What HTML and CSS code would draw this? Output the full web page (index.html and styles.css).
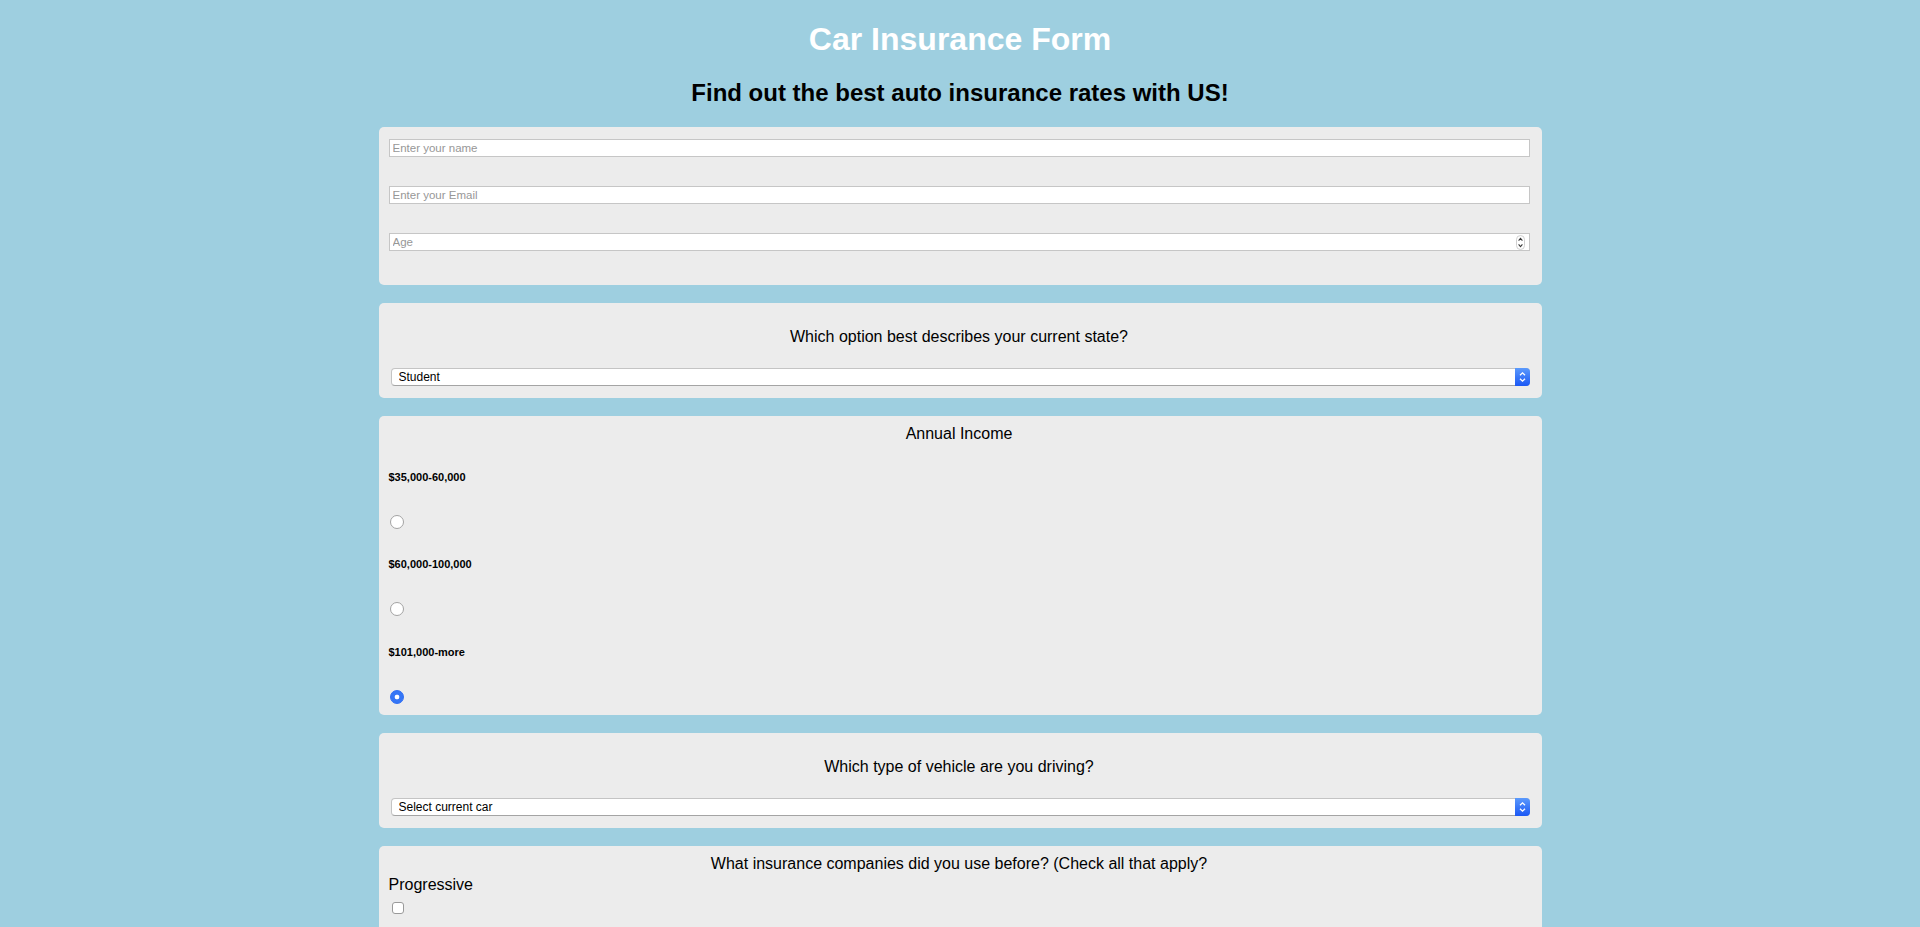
FILE: index.html
```html
<!DOCTYPE html>
<html lang="en">
<head>
<meta charset="utf-8">
<title>Car Insurance Form</title>
<link rel="stylesheet" href="styles.css">
</head>
<body>
<h1 class="title">Car Insurance Form</h1>
<h2 class="subtitle">Find out the best auto insurance rates with US!</h2>
<form class="form">
  <section class="card card-fields">
    <input class="field" type="text" placeholder="Enter your name">
    <input class="field" type="text" placeholder="Enter your Email">
    <div class="number-wrap">
      <input class="field" type="text" placeholder="Age">
      <span class="spinner">
        <svg width="9" height="15" viewBox="0 0 9 15">
          <rect x="0.5" y="0.5" width="8" height="14" rx="4" fill="#fff" stroke="#cfcfcf"/>
          <path d="M2.6 5.6 L4.5 3.4 L6.4 5.6" fill="none" stroke="#3a3a3a" stroke-width="1.1"/>
          <path d="M2.6 9.4 L4.5 11.6 L6.4 9.4" fill="none" stroke="#3a3a3a" stroke-width="1.1"/>
        </svg>
      </span>
    </div>
  </section>

  <section class="card card-question">
    <p class="question">Which option best describes your current state?</p>
    <div class="select-wrap">
      <select class="select">
        <option>Student</option>
        <option>Full Time Job</option>
        <option>Part Time Job</option>
        <option>Other</option>
      </select>
      <span class="select-btn">
        <svg width="15" height="18" viewBox="0 0 15 18">
          <path d="M5 7.2 L7.5 4.8 L10 7.2" fill="none" stroke="#fff" stroke-width="1.3"/>
          <path d="M5 10.8 L7.5 13.2 L10 10.8" fill="none" stroke="#fff" stroke-width="1.3"/>
        </svg>
      </span>
    </div>
  </section>

  <section class="card card-income">
    <p class="question">Annual Income</p>
    <div class="options">
      <div class="option">
        <h5 class="option-label">$35,000-60,000</h5>
        <input class="radio" type="radio" name="income">
      </div>
      <div class="option">
        <h5 class="option-label">$60,000-100,000</h5>
        <input class="radio" type="radio" name="income">
      </div>
      <div class="option">
        <h5 class="option-label">$101,000-more</h5>
        <input class="radio" type="radio" name="income" checked>
      </div>
    </div>
  </section>

  <section class="card card-question">
    <p class="question">Which type of vehicle are you driving?</p>
    <div class="select-wrap">
      <select class="select">
        <option>Select current car</option>
        <option>Sedan</option>
        <option>SUV</option>
        <option>Truck</option>
      </select>
      <span class="select-btn">
        <svg width="15" height="18" viewBox="0 0 15 18">
          <path d="M5 7.2 L7.5 4.8 L10 7.2" fill="none" stroke="#fff" stroke-width="1.3"/>
          <path d="M5 10.8 L7.5 13.2 L10 10.8" fill="none" stroke="#fff" stroke-width="1.3"/>
        </svg>
      </span>
    </div>
  </section>

  <section class="card card-companies">
    <p class="question">What insurance companies did you use before? (Check all that apply?</p>
    <div class="company">
      <span class="company-name">Progressive</span>
      <input class="check" type="checkbox">
    </div>
  </section>
</form>
</body>
</html>
```
FILE: styles.css
```css
html, body {
  margin: 0;
  padding: 0;
}

body {
  background: #9ecfe0;
  font-family: "Liberation Sans", Arial, Helvetica, sans-serif;
  color: #000;
}

.title {
  margin: 21px 0 0;
  font-size: 32px;
  line-height: 37px;
  font-weight: bold;
  color: #fff;
  text-align: center;
}

.subtitle {
  margin: 21px 0 20px;
  font-size: 24px;
  line-height: 28px;
  font-weight: bold;
  text-align: center;
}

.form {
  width: 1163px;
  margin: 0 auto;
  display: flex;
  flex-direction: column;
  gap: 18px;
  padding-bottom: 40px;
}

.card {
  background: #ececec;
  border-radius: 5px;
  padding: 0 12px 0 10px;
  display: flex;
  flex-direction: column;
  box-sizing: border-box;
}

/* text inputs */
.card-fields {
  padding-top: 12px;
  padding-bottom: 34px;
  gap: 29px;
}

.field {
  display: block;
  width: 100%;
  height: 18px;
  margin: 0;
  padding: 0 2px 0 3px;
  box-sizing: border-box;
  border: 1px solid #c6c6c6;
  border-radius: 0;
  background: #fff;
  font-family: "Liberation Sans", Arial, sans-serif;
  font-size: 11.5px;
  color: #000;
  outline: none;
}

.field::placeholder {
  color: #979797;
}

.number-wrap {
  position: relative;
}

.spinner {
  position: absolute;
  right: 5px;
  top: 2px;
  width: 9px;
  height: 15px;
  display: flex;
}

/* questions with selects */
.card-question {
  padding-top: 25px;
  padding-bottom: 12px;
}

.question {
  margin: 0;
  font-size: 16px;
  line-height: 18px;
  text-align: center;
}

.select-wrap {
  position: relative;
  margin: 22px 0 0 2px;
  height: 18px;
}

.select {
  appearance: none;
  -webkit-appearance: none;
  display: block;
  width: 100%;
  height: 18px;
  margin: 0;
  padding: 0 0 0 7px;
  box-sizing: border-box;
  border: 1px solid #c4c4c4;
  border-bottom-color: #a4a4a4;
  border-radius: 4px;
  background: #fff;
  font-family: "Liberation Sans", Arial, sans-serif;
  font-size: 12px;
  line-height: 16px;
  color: #000;
  outline: none;
}

.select-btn {
  position: absolute;
  right: 0;
  top: 0;
  width: 15px;
  height: 18px;
  border-radius: 0 4px 4px 0;
  background: linear-gradient(#5b9afc, #1b58f5);
  display: flex;
  pointer-events: none;
}

/* income radios */
.card-income {
  padding-top: 9px;
  padding-bottom: 11px;
}

.options {
  margin-top: 28px;
  display: flex;
  flex-direction: column;
  gap: 29.3px;
}

.option {
  display: flex;
  flex-direction: column;
  align-items: flex-start;
}

.option-label {
  margin: 0;
  font-size: 11px;
  line-height: 13px;
  font-weight: bold;
}

.radio {
  appearance: none;
  -webkit-appearance: none;
  width: 14px;
  height: 14px;
  margin: 31px 0 0 1px;
  box-sizing: border-box;
  border: 1px solid #a3a3a3;
  border-radius: 50%;
  background: #fff;
}

.radio:checked {
  border-color: #2d6cf4;
  background: radial-gradient(circle, #fff 0 2px, #3576f6 2.7px);
}

/* companies checkboxes */
.card-companies {
  padding-top: 9px;
  padding-bottom: 30px;
}

.company {
  display: flex;
  flex-direction: column;
  align-items: flex-start;
  margin-top: 3px;
}

.company-name {
  font-size: 16px;
  line-height: 18px;
}

.check {
  appearance: none;
  -webkit-appearance: none;
  width: 12px;
  height: 12px;
  margin: 8px 0 0 3px;
  box-sizing: border-box;
  border: 1px solid #9a9a9a;
  border-radius: 3px;
  background: #fff;
}
```
